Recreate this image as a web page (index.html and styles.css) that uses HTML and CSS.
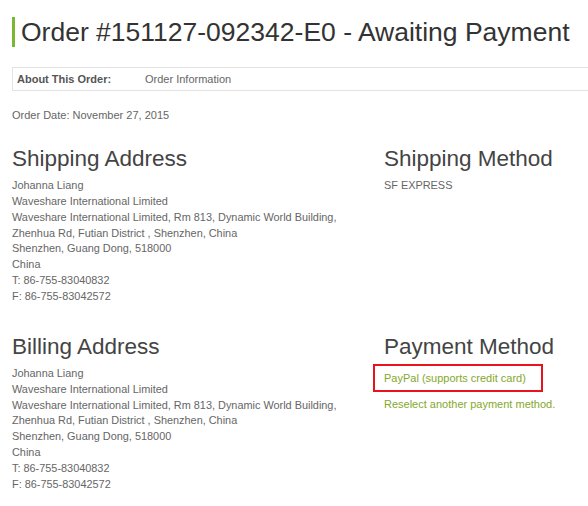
FILE: index.html
```html
<!DOCTYPE html>
<html>
<head>
<meta charset="utf-8">
<link rel="stylesheet" href="styles.css">
</head>
<body>
<div class="page">
  <h1 class="title">Order #151127-092342-E0 - Awaiting Payment</h1>
  <div class="about">
    <span class="about-label">About This Order:</span>
    <span class="about-item">Order Information</span>
  </div>
  <p class="date">Order Date: November 27, 2015</p>
  <div class="row">
    <div class="col-left">
      <h2 class="heading">Shipping Address</h2>
      <address class="addr">Johanna Liang<br>Waveshare International Limited<br>Waveshare International Limited, Rm 813, Dynamic World Building,<br>Zhenhua Rd, Futian District , Shenzhen, China<br>Shenzhen, Guang Dong, 518000<br>China<br>T: 86-755-83040832<br>F: 86-755-83042572</address>
    </div>
    <div class="col-right">
      <h2 class="heading">Shipping Method</h2>
      <p class="method">SF EXPRESS</p>
    </div>
  </div>
  <div class="row row-billing">
    <div class="col-left">
      <h2 class="heading">Billing Address</h2>
      <address class="addr">Johanna Liang<br>Waveshare International Limited<br>Waveshare International Limited, Rm 813, Dynamic World Building,<br>Zhenhua Rd, Futian District , Shenzhen, China<br>Shenzhen, Guang Dong, 518000<br>China<br>T: 86-755-83040832<br>F: 86-755-83042572</address>
    </div>
    <div class="col-right">
      <h2 class="heading">Payment Method</h2>
      <div class="paybox">PayPal (supports credit card)</div>
      <p class="reselect">Reselect another payment method.</p>
    </div>
  </div>
</div>
</body>
</html>
```
FILE: styles.css
```css
html, body {
  margin: 0;
  padding: 0;
  background: #fff;
}
body {
  font-family: "Liberation Sans", Arial, sans-serif;
  color: #555;
}
.page {
  padding: 17px 0 0 12px;
  overflow: hidden;
}
.title {
  margin: 0;
  font-weight: normal;
  font-size: 26.5px;
  line-height: 30px;
  color: #333;
  border-left: 3px solid #7cb82f;
  padding-left: 6px;
  white-space: nowrap;
}
.about {
  margin-top: 20px;
  width: 600px;
  height: 24px;
  border: 1px solid #e3e3e3;
  box-sizing: border-box;
  display: flex;
  align-items: center;
  font-size: 11px;
  color: #555;
}
.about-label {
  font-weight: bold;
  padding-left: 4px;
  width: 128px;
}
.about-item {
  color: #666;
}
.date {
  margin: 16px 0 0;
  font-size: 11px;
  line-height: 16px;
  color: #666;
}
.row {
  display: flex;
  margin-top: 22px;
}
.row-billing {
  margin-top: 28px;
}
.col-left {
  width: 372px;
}
.col-right {
  flex: 1;
}
.heading {
  margin: 0;
  font-weight: normal;
  font-size: 22.5px;
  line-height: 28px;
  color: #444;
}
.addr {
  font-style: normal;
  font-size: 10.9px;
  line-height: 15.86px;
  color: #666;
  margin-top: 5px;
}
.method {
  margin: 5px 0 0;
  font-size: 10.9px;
  line-height: 15.86px;
  color: #666;
}
.paybox {
  margin: 3px 0 0 -11px;
  width: 170px;
  height: 28px;
  box-sizing: border-box;
  border: 2px solid #e8141b;
  padding-left: 9px;
  display: flex;
  align-items: center;
  font-size: 11px;
  color: #84a82c;
}
.reselect {
  margin: 4px 0 0;
  font-size: 11px;
  line-height: 16px;
  color: #84a82c;
}
```
